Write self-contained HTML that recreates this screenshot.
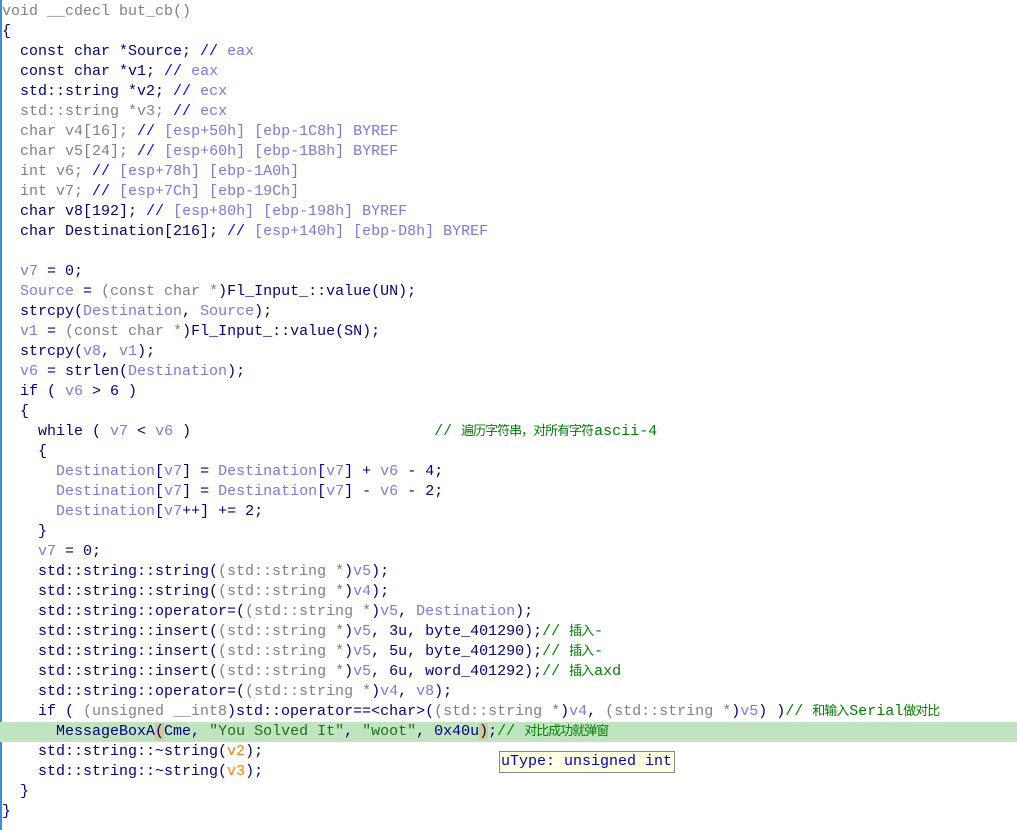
<!DOCTYPE html>
<html><head><meta charset="utf-8"><style>
html,body{margin:0;padding:0;background:#fff;width:1017px;height:830px;overflow:hidden}
body{border-left:2px solid #3c8cdc;box-sizing:border-box;position:relative}
pre{margin:0;padding:2px 0 0 0;font-family:"Liberation Mono",monospace;font-size:15px;line-height:20px;color:#000080;white-space:pre}
.l{height:20px;overflow:hidden}
.g{color:#808080}.v{color:#7878e0}.c{color:#008000}.o{color:#ff8000}.s{color:#1e6e1e}.b{color:#0000ff}
.k{font-family:"Noto Sans CJK SC",sans-serif;font-size:13px;letter-spacing:-1px;margin-right:1px;line-height:15px}
.hl{background:#c0e4c0;margin-left:-2px;padding-left:2px}
.br{background:#d6c88c}
#tip{position:absolute;left:497px;top:751px;width:176px;height:22px;border:1px solid #888;background:#ffffe1;font-family:"Liberation Mono",monospace;font-size:15px;line-height:20px;color:#0000c0;padding-left:1px;box-sizing:border-box;white-space:nowrap;overflow:hidden}
</style></head><body><pre>
<div class="l g">void __cdecl but_cb()</div><div class="l">{</div><div class="l">  const char *Source; <span class="b">//</span> <span class="v">eax</span></div><div class="l">  const char *v1; <span class="b">//</span> <span class="v">eax</span></div><div class="l">  std::string *v2; <span class="b">//</span> <span class="v">ecx</span></div><div class="l"><span class="g">  std::string *v3; </span><span class="b">//</span> <span class="v">ecx</span></div><div class="l"><span class="g">  char v4[16]; </span><span class="b">//</span> <span class="v">[esp+50h] [ebp-1C8h] BYREF</span></div><div class="l"><span class="g">  char v5[24]; </span><span class="b">//</span> <span class="v">[esp+60h] [ebp-1B8h] BYREF</span></div><div class="l"><span class="g">  int v6; </span><span class="b">//</span> <span class="v">[esp+78h] [ebp-1A0h]</span></div><div class="l"><span class="g">  int v7; </span><span class="b">//</span> <span class="v">[esp+7Ch] [ebp-19Ch]</span></div><div class="l">  char v8[192]; <span class="b">//</span> <span class="v">[esp+80h] [ebp-198h] BYREF</span></div><div class="l">  char Destination[216]; <span class="b">//</span> <span class="v">[esp+140h] [ebp-D8h] BYREF</span></div><div class="l"> </div><div class="l">  <span class="v">v7</span> = 0;</div><div class="l">  <span class="v">Source</span> = <span class="g">(const char *</span>)Fl_Input_::value(UN);</div><div class="l">  strcpy(<span class="v">Destination</span>, <span class="v">Source</span>);</div><div class="l">  <span class="v">v1</span> = <span class="g">(const char *</span>)Fl_Input_::value(SN);</div><div class="l">  strcpy(<span class="v">v8</span>, <span class="v">v1</span>);</div><div class="l">  <span class="v">v6</span> = strlen(<span class="v">Destination</span>);</div><div class="l">  if ( <span class="v">v6</span> &gt; 6 )</div><div class="l">  {</div><div class="l">    while ( <span class="v">v7</span> &lt; <span class="v">v6</span> )                           <span class="c">// <span class="k">遍历字符串，对所有字符</span>ascii-4</span></div><div class="l">    {</div><div class="l">      <span class="v">Destination</span>[<span class="v">v7</span>] = <span class="v">Destination</span>[<span class="v">v7</span>] + <span class="v">v6</span> - 4;</div><div class="l">      <span class="v">Destination</span>[<span class="v">v7</span>] = <span class="v">Destination</span>[<span class="v">v7</span>] - <span class="v">v6</span> - 2;</div><div class="l">      <span class="v">Destination</span>[<span class="v">v7</span>++] += 2;</div><div class="l">    }</div><div class="l">    <span class="v">v7</span> = 0;</div><div class="l">    std::string::string(<span class="g">(std::string *</span>)<span class="v">v5</span>);</div><div class="l">    std::string::string(<span class="g">(std::string *</span>)<span class="v">v4</span>);</div><div class="l">    std::string::operator=(<span class="g">(std::string *</span>)<span class="v">v5</span>, <span class="v">Destination</span>);</div><div class="l">    std::string::insert(<span class="g">(std::string *</span>)<span class="v">v5</span>, 3u, byte_401290);<span class="c">// <span class="k">插入</span>-</span></div><div class="l">    std::string::insert(<span class="g">(std::string *</span>)<span class="v">v5</span>, 5u, byte_401290);<span class="c">// <span class="k">插入</span>-</span></div><div class="l">    std::string::insert(<span class="g">(std::string *</span>)<span class="v">v5</span>, 6u, word_401292);<span class="c">// <span class="k">插入</span>axd</span></div><div class="l">    std::string::operator=(<span class="g">(std::string *</span>)<span class="v">v4</span>, <span class="v">v8</span>);</div><div class="l">    if ( <span class="g">(unsigned __int8</span>)std::operator==&lt;char&gt;(<span class="g">(std::string *</span>)<span class="v">v4</span>, <span class="g">(std::string *</span>)<span class="v">v5</span>) )<span class="c">// <span class="k">和输入</span>Serial<span class="k">做对比</span></span></div><div class="l hl">      MessageBoxA<span class="br">(</span>Cme, <span class="s">"You Solved It"</span>, <span class="s">"woot"</span>, 0x40u<span class="br">)</span>;<span class="c">// <span class="k">对比成功就弹窗</span></span></div><div class="l">    std::string::~string(<span class="o">v2</span>);</div><div class="l">    std::string::~string(<span class="o">v3</span>);</div><div class="l">  }</div><div class="l">}</div></pre>
<div id="tip">uType: unsigned int</div>
</body></html>
